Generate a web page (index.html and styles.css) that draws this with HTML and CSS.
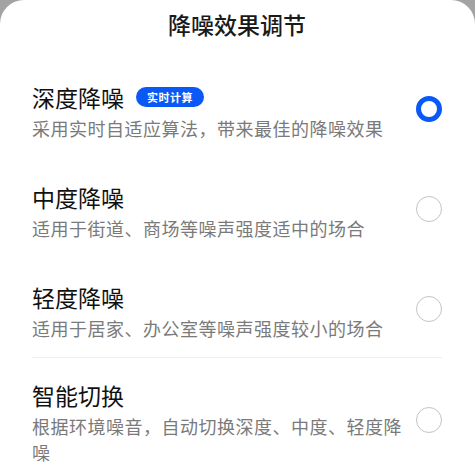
FILE: index.html
```html
<!DOCTYPE html>
<html lang="zh-CN">
<head>
<meta charset="utf-8">
<link rel="stylesheet" href="styles.css">
</head>
<body>
<div class="sheet">
  <h1 class="title">降噪效果调节</h1>
  <ul class="list">
    <li class="item">
      <div class="text">
        <div class="name">深度降噪<span class="badge">实时计算</span></div>
        <div class="desc">采用实时自适应算法，带来最佳的降噪效果</div>
      </div>
      <span class="radio checked"></span>
    </li>
    <li class="item">
      <div class="text">
        <div class="name">中度降噪</div>
        <div class="desc">适用于街道、商场等噪声强度适中的场合</div>
      </div>
      <span class="radio"></span>
    </li>
    <li class="item">
      <div class="text">
        <div class="name">轻度降噪</div>
        <div class="desc">适用于居家、办公室等噪声强度较小的场合</div>
      </div>
      <span class="radio"></span>
    </li>
    <li class="item divided">
      <div class="text">
        <div class="name">智能切换</div>
        <div class="desc">根据环境噪音，自动切换深度、中度、轻度降噪</div>
      </div>
      <span class="radio"></span>
    </li>
  </ul>
</div>
</body>
</html>
```
FILE: styles.css
```css
* { box-sizing: border-box; }
html, body { margin: 0; padding: 0; }
body {
  background: #a3a3a3;
  font-family: "Noto Sans CJK SC", "Noto Sans", sans-serif;
  width: 475px;
  height: 473px;
  overflow: hidden;
}
.sheet {
  background: #ffffff;
  border-radius: 24px 24px 0 0;
  height: 473px;
  padding: 0 33px 0 32px;
}
.title {
  margin: 0;
  padding-top: 7px;
  height: 61px;
  text-align: center;
  font-size: 23px;
  line-height: 34px;
  font-weight: 500;
  color: #1a1a1a;
}
.list {
  list-style: none;
  margin: 0;
  padding: 0;
}
.item {
  display: flex;
  align-items: center;
  justify-content: space-between;
  padding: 20px 0;
}
.item.divided {
  border-top: 1px solid #efefef;
  margin-top: -4px;
  padding-top: 21px;
}
.text {
  width: 372px;
}
.name {
  display: flex;
  align-items: center;
  font-size: 23px;
  line-height: 32px;
  color: #111111;
}
.badge {
  margin-left: 12px;
  background: #0a59f7;
  color: #ffffff;
  font-size: 11px;
  font-weight: 700;
  line-height: 20px;
  height: 20px;
  padding: 0 11px;
  border-radius: 10px;
  letter-spacing: 0.5px;
}
.desc {
  margin-top: 2px;
  font-size: 18px;
  letter-spacing: 0.5px;
  line-height: 26px;
  color: #7a7a7a;
}
.radio {
  flex: none;
  width: 26px;
  height: 26px;
  border-radius: 50%;
  border: 1.5px solid #c4c4c4;
  margin-top: -4px;
}
.radio.checked {
  border: 5px solid #0a59f7;
}
```
